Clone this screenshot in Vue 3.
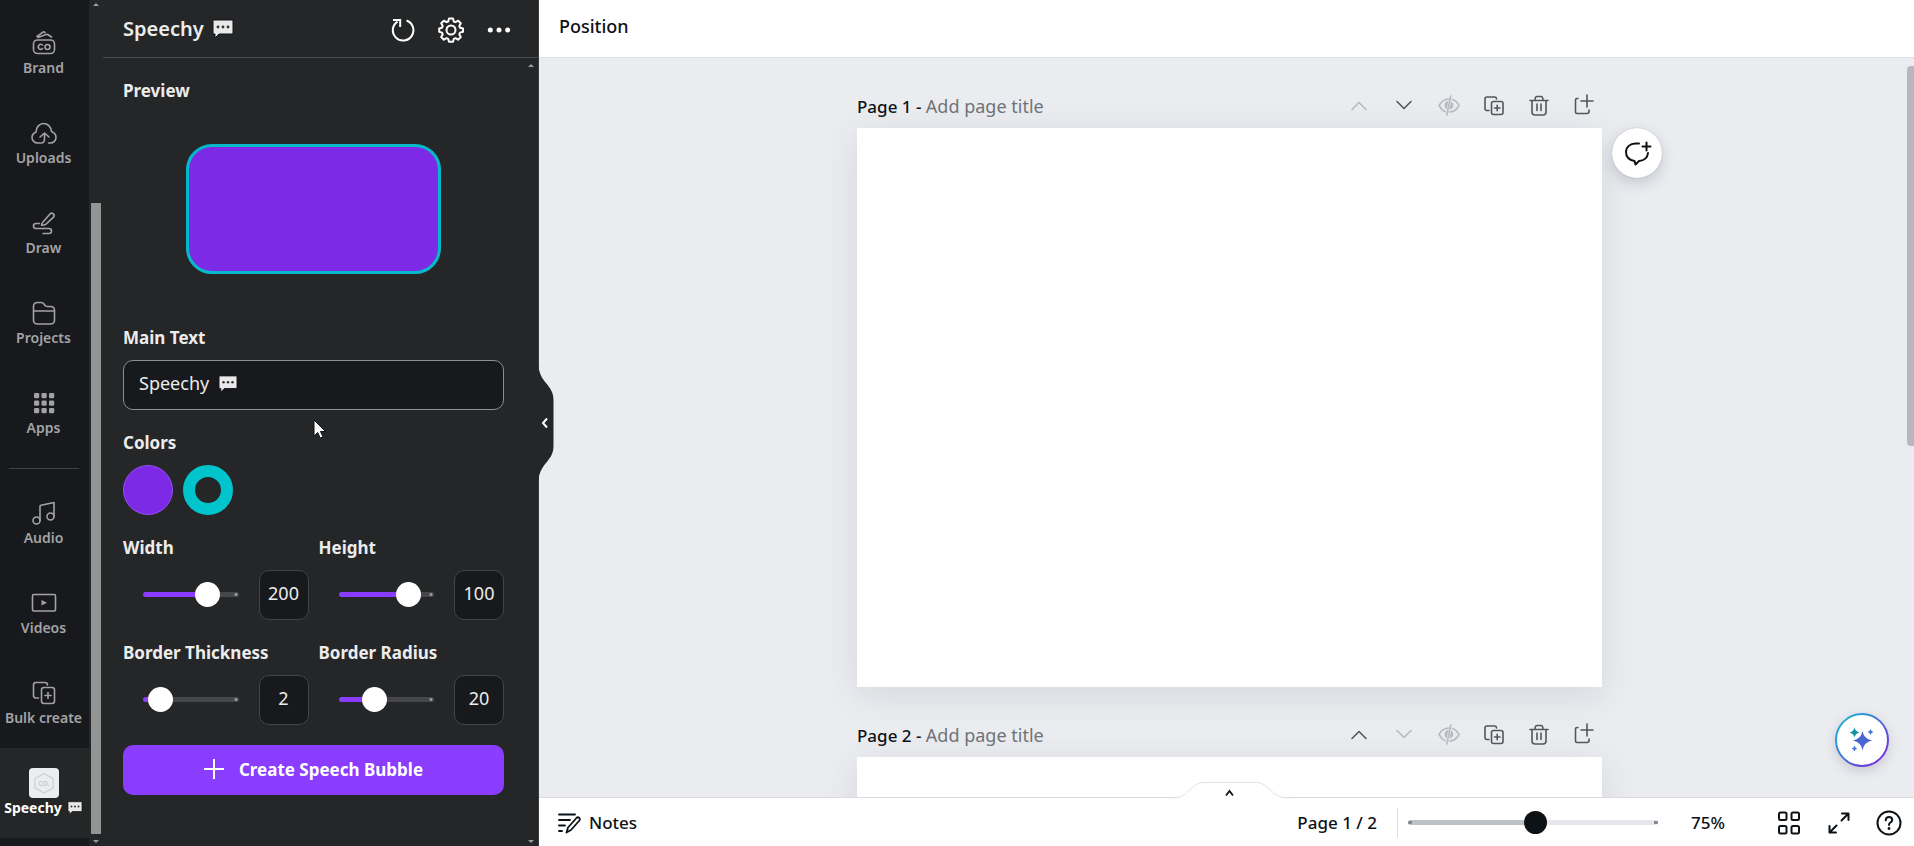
<script setup>
import { ref, computed } from 'vue'

const navTop = ['Brand', 'Uploads', 'Draw', 'Projects', 'Apps']
const navBottom = ['Audio', 'Videos', 'Bulk create']
const mainText = ref('Speechy')
const sliders = ref([
  { id: 'width', label: 'Width', value: 200, max: 272 },
  { id: 'height', label: 'Height', value: 100, max: 123 },
  { id: 'thickness', label: 'Border Thickness', value: 2, max: 26 },
  { id: 'radius', label: 'Border Radius', value: 20, max: 61 }
])
const zoom = ref(75)
const zoomFill = computed(() => Math.round((zoom.value / 147) * 100) + '%')
const fill = (s) => Math.round((s.value / s.max) * 100) + '%'
const pages = [
  { n: 1, up: false, down: true },
  { n: 2, up: true, down: false }
]
</script>

<template>
  <div class="app">
    <svg class="defs" aria-hidden="true">
      <symbol id="bubble" viewBox="0 0 22 20">
        <path d="M2 1h18q1 0 1 1v12q0 1-1 1H7l-4 4v-4H2q-1 0-1-1V2q0-1 1-1z" fill="#e9e9ea" stroke="#121316" stroke-width="1" />
        <circle cx="6" cy="8" r="1.4" fill="#333" /><circle cx="11" cy="8" r="1.4" fill="#333" /><circle cx="16" cy="8" r="1.4" fill="#333" />
      </symbol>
      <symbol id="i-Brand" viewBox="0 0 30 30">
        <rect x="4.500" y="12" width="21" height="13.500" rx="4" />
        <path d="M8 8.500l6-4.300q1.200-.8 2 .4M9 9.500l8-3q1.500-.4 2.500.5l3 2" />
        <path d="M13.500 17q-2-1.600-3.600.2-1.400 2 .2 3.600 1.800 1.200 3.400-.2" />
        <circle cx="18.500" cy="19" r="2.500" />
      </symbol>
      <symbol id="i-Uploads" viewBox="0 0 30 30">
        <path d="M11 25H8.500A5.500 5.500 0 0 1 3 19.500c0-3 1.800-4.500 4-5.500.2-5 3.500-8.500 7.500-8.500s7.500 3 8 8c2.500 1 4.500 3 4.500 6 0 3-2.500 5.500-5.500 5.500H19.500M11 19l4.500-4 4.500 4M15.500 15.500v5.500q0 4-3.500 4" />
      </symbol>
      <symbol id="i-Draw" viewBox="0 0 30 30">
        <path d="M14 14l7-8q1.500-1.600 3.300-.2 1.700 1.600.2 3.300l-7.500 7q-1.500 1-4.500 1.200.3-2 1.500-3.300zM10.500 15.500H7a2.500 2.500 0 0 0 0 5H20a2.500 2.500 0 0 1 0 5H14" />
      </symbol>
      <symbol id="i-Projects" viewBox="0 0 30 30">
        <path d="M4.500 22V8.500q0-4 4-4h3.500q2 0 3 1.500l.8 1.200q.7 1.300 2.500 1.300h3.200q4 0 4 4V22q0 4-4 4h-13q-4 0-4-4zM4.500 13h21" />
      </symbol>
      <symbol id="i-Apps" viewBox="0 0 30 30">
        <g fill="currentColor" stroke="none">
          <rect v-for="i in 9" :key="i" :x="5 + ((i - 1) % 3) * 7.5" :y="5 + Math.floor((i - 1) / 3) * 7.5" width="5.200" height="5.200" rx="1.300" />
        </g>
      </symbol>
      <symbol id="i-Audio" viewBox="0 0 30 30">
        <circle cx="7.500" cy="22.500" r="3.500" /><circle cx="21.500" cy="18.500" r="3.500" />
        <path d="M11 22.500V8.500q0-1 1-1.300L25 4.500v14" />
      </symbol>
      <symbol id="i-Videos" viewBox="0 0 30 30">
        <rect x="3.500" y="6.500" width="23" height="16.500" rx="1.500" />
        <path d="M12.500 12v5.500l5.500-2.700z" fill="currentColor" stroke="none" />
      </symbol>
      <symbol id="i-Bulk create" viewBox="0 0 30 30">
        <path d="M9.500 20H7q-2.500 0-2.500-2.500V7Q4.500 4.500 7 4.500h9Q18.500 4.500 18.500 7" />
        <rect x="12.500" y="9.500" width="13" height="16" rx="2.500" /><path d="M16 17.500h6M19 14.500v6" />
      </symbol>
    </svg>

    <nav class="rail" aria-label="Tools">
      <button v-for="n in navTop" :key="n" class="nav"><svg><use :href="'#i-' + n" /></svg><span>{{ n }}</span></button>
      <hr class="rule">
      <button v-for="n in navBottom" :key="n" class="nav"><svg><use :href="'#i-' + n" /></svg><span>{{ n }}</span></button>
      <button class="nav current">
        <svg viewBox="0 0 30 30" class="logo"><rect width="30" height="30" rx="4" fill="#ebeef1" /><path d="M15 5.500l9 5v9.500l-9 5-9-5v-9.500z" fill="none" stroke="#d3d5d7" stroke-width="1.500" /><text x="15" y="18" text-anchor="middle">CO.</text></svg>
        <span>Speechy <svg class="mini"><use href="#bubble" /></svg></span>
      </button>
      <div class="rail-end"></div>
    </nav>

    <div class="rail-scroll">
      <svg viewBox="0 0 6 3"><path d="M0 3l3-3 3 3z" /></svg>
      <div class="thumb"></div>
      <svg viewBox="0 0 6 3"><path d="M0 0l3 3 3-3z" /></svg>
    </div>

    <aside class="panel">
      <header class="panel-head">
        <h1>Speechy <svg class="emoji"><use href="#bubble" /></svg></h1>
        <button aria-label="Reload"><svg viewBox="0 0 30 30"><path d="M18.500 5.500A10.300 10.300 0 1 1 9.500 6.600M5 5h7.200v7" stroke-width="2" /></svg></button>
        <button aria-label="Settings"><svg viewBox="0 0 30 30"><circle cx="15" cy="15" r="4.500" stroke-width="2" /><path stroke-width="2" stroke-linejoin="round" d="M13 3.500h4l.8 3 1.700.7 2.700-1.500 2.600 2.600-1.500 2.700.7 1.700 3 .8v3.300l-3 .8-.7 1.800 1.500 2.700-2.700 2.600-2.600-1.500-1.700.7-.8 2.900h-4l-.8-2.900-1.700-.7-2.700 1.500-2.600-2.600 1.500-2.700-.7-1.800-2.800-.8v-3.300l2.800-.8.700-1.700-1.500-2.700 2.600-2.600 2.700 1.500 1.700-.7z" /></svg></button>
        <button aria-label="More"><svg viewBox="0 0 30 30"><g fill="currentColor" stroke="none"><circle cx="6.300" cy="15" r="2.500" /><circle cx="15" cy="15" r="2.500" /><circle cx="23.700" cy="15" r="2.500" /></g></svg></button>
      </header>
      <div class="panel-body">
        <form class="form" @submit.prevent>
          <section class="field"><h2>Preview</h2><div class="preview"><div class="shape"></div></div></section>
          <section class="field">
            <label for="main-text">Main Text</label>
            <div class="text-wrap"><input id="main-text" v-model="mainText" type="text"><svg class="emoji in-text"><use href="#bubble" /></svg></div>
          </section>
          <section class="field">
            <h2>Colors</h2>
            <div class="swatches"><button type="button" class="swatch solid" aria-label="Fill color"></button><button type="button" class="swatch ring" aria-label="Border color"></button></div>
          </section>
          <div class="grid">
            <section v-for="s in sliders" :key="s.id" class="field">
              <label :for="s.id">{{ s.label }}</label>
              <div class="slide-row">
                <div class="track-wrap"><input :id="s.id" v-model.number="s.value" class="range" type="range" min="0" :max="s.max" :style="{ '--fill': fill(s) }"></div>
                <input v-model.number="s.value" class="num" type="text" :aria-label="s.label + ' value'">
              </div>
            </section>
          </div>
          <button class="create"><svg viewBox="0 0 20 20"><path d="M10 0v20M0 10h20" /></svg>Create Speech Bubble</button>
        </form>
        <div class="body-scroll">
          <svg viewBox="0 0 6 3"><path d="M0 3l3-3 3 3z" /></svg>
          <svg viewBox="0 0 6 3"><path d="M0 0l3 3 3-3z" /></svg>
        </div>
      </div>
      <button class="handle" aria-label="Collapse panel"><svg viewBox="0 0 16 120"><path d="M0 0c1 11 4 15 8 20s7.500 9 7.500 17v46c0 8-3.500 12-7.500 17s-7 9-8 20z" fill="#252627" /><path d="M9 55.500l-4 4.500 4 4.500" fill="none" stroke="#fff" stroke-width="2" /></svg></button>
      <svg class="pointer" viewBox="0 0 13 20"><path d="M1 1v16l3.700-3.500L7.200 19l2.800-1.200-2.500-5.300h5z" fill="#fff" stroke="#111" /></svg>
    </aside>

    <main class="editor">
      <div class="topbar"><button>Position</button></div>
      <div class="canvas">
        <section v-for="p in pages" :key="p.n" class="page-block">
          <div class="page-head">
            <h3>Page {{ p.n }} - <span>Add page title</span></h3>
            <div class="acts">
              <button aria-label="Move up" :class="{ off: !p.up }"><svg viewBox="0 0 32 32"><path d="M9 19.500l7-7 7 7" /></svg></button>
              <button aria-label="Move down" :class="{ off: !p.down }"><svg viewBox="0 0 32 32"><path d="M9 11.500l7 7 7-7" /></svg></button>
              <button aria-label="Hide page" class="off"><svg viewBox="0 0 32 32"><path d="M12 21.700Q8.500 20 6 15.500q3.500-6.500 10-6.500M19.500 9.400Q23.500 10.800 26 15.500q-3.500 6.500-9.500 6.500M17.800 6l-4 19" /><path d="M15.500 11q-4 .8-4 4.500 0 3 2 4zM18 11.500l-1.500 8q3.500-1 4-4 0-2.500-2.500-4z" fill="currentColor" stroke="none" /></svg></button>
              <button aria-label="Duplicate page"><svg viewBox="0 0 32 32"><path d="M11 20.500H9q-2 0-2-2V9q0-2 2-2h7.500q2 0 2 2" /><rect x="13.500" y="11.500" width="11.500" height="13" rx="2" /><path d="M16.500 18h5.500M19.200 15.300v5.500" /></svg></button>
              <button aria-label="Delete page"><svg viewBox="0 0 32 32"><path d="M7 10.500h18M12 10.500q0-4 2-4h4q2 0 2 4M9 10.500V22q0 3 3 3h8q3 0 3-3V10.500M14 14v6.500M18 14v6.500" /></svg></button>
              <button aria-label="Add page"><svg viewBox="0 0 32 32"><path d="M10 8.500H9Q7.500 8.500 7.500 10v12q0 1.500 1.500 1.500h10q2 0 2-2V20M13 11h12M19 5v12" /></svg></button>
            </div>
          </div>
          <div class="page">
            <button v-if="p.n === 1" class="comment" aria-label="Add comment"><svg viewBox="0 0 30 30"><path d="M17 5.500h-3.500C8 5.500 4 9 4 14c0 4.500 3 8 8.500 9l1 3.500 3.500-3.500c5.500-.5 8.500-3.500 9-8M24.500 4.500v8M20.500 8.500h8" /></svg></button>
          </div>
        </section>
        <div class="canvas-scroll"></div>
        <button class="assist" aria-label="Assistant"><svg viewBox="0 0 54 54">
          <defs><linearGradient id="rg" x1="0" y1="0" x2="1" y2="1"><stop offset=".15" stop-color="#1fa9d1" /><stop offset=".85" stop-color="#7137dd" /></linearGradient></defs>
          <circle cx="27" cy="27" r="26" fill="#fff" stroke="url(#rg)" stroke-width="2" />
          <path d="M27.500 18q1.500 8 9.500 9.500-8 1.500-9.500 10-1.500-8.500-9.500-10 8-1.500 9.500-9.500z" fill="#4a68d0" />
          <path d="M19.500 14.500q.8 4 5 5-4.200 1-5 5-.8-4-5-5 4.200-1 5-5z" fill="#1593a5" />
          <path d="M35.500 16q.5 2.500 3 3-2.500.5-3 3-.5-2.500-3-3 2.500-.5 3-3zM19.500 32.500q.5 2.500 3 3-2.500.5-3 3-.5-2.500-3-3 2.500-.5 3-3z" fill="#4071cf" />
        </svg></button>
      </div>
      <footer class="bottom">
        <button class="drawer" aria-label="Show pages"><svg viewBox="0 0 120 17"><path d="M0 16.500c14 0 16-5 21-10s8-6 14-6h50c6 0 9 1 14 6s7 10 21 10z" fill="#fff" /><path d="M0 16c14 0 16-5 21-9.500S29 .5 35 .5h50c6 0 9 1.500 14 6s7 9.500 21 9.500" fill="none" stroke="#e1e2e6" /><path d="M56 13.500l3.500-4.500 3.500 4.500" fill="none" stroke="#0d1216" stroke-width="1.800" /></svg></button>
        <button class="notes"><svg viewBox="0 0 24 24"><path d="M2 3.500h16M2 9h11M2 14.500h6M2 20h3M9.500 21.500l1.500-5L19.500 7q1.300-1.300 2.700-.2 1.200 1.300.2 2.700L14 19z" /></svg>Notes</button>
        <span class="count">Page 1 / 2</span>
        <div class="vr"></div>
        <input v-model.number="zoom" class="zoom" type="range" min="0" max="147" aria-label="Zoom" :style="{ '--fill': zoomFill }">
        <button class="pct">75%</button>
        <button class="ic" aria-label="Grid view"><svg viewBox="0 0 30 30"><rect x="5" y="4.500" width="7.500" height="7.500" rx="1.500" /><rect x="17.500" y="4.500" width="7.500" height="7.500" rx="1.500" /><rect x="5" y="18" width="7.500" height="7.500" rx="1.500" /><rect x="17.500" y="18" width="7.500" height="7.500" rx="1.500" /></svg></button>
        <button class="ic" aria-label="Full screen"><svg viewBox="0 0 30 30"><path d="M18 5.500h6.500V12M24.500 5.500l-7 7M5.500 18v6.500H12M5.500 24.500l7-7" /></svg></button>
        <button class="ic" aria-label="Help"><svg viewBox="0 0 30 30"><circle cx="15" cy="15" r="11.500" /><path d="M11.700 12.300q.3-3.300 3.300-3.300 3.200 0 3.200 2.800 0 1.700-1.700 2.600-1.500.8-1.500 2.600" /><circle cx="15" cy="20.500" r="1.400" fill="currentColor" stroke="none" /></svg></button>
      </footer>
    </main>
  </div>
</template>

<style>
html, body { height: 100%; }
body { margin: 0; overflow: hidden; }
</style>

<style scoped>
* { box-sizing: border-box; }
.app { display: flex; height: 100vh; overflow: hidden; background: #252627; font-family: "Noto Sans", "Liberation Sans", sans-serif; font-size: 17px; color: #0d1216; }
.defs { position: absolute; width: 0; height: 0; }
svg { display: block; flex: none; }
button { font: inherit; color: inherit; background: none; border: 0; padding: 0; margin: 0; }
h1, h2, h3 { margin: 0; }

.rail { width: 89px; flex: none; padding-top: 8px; display: flex; flex-direction: column; background: #18191d; }
.nav { height: 90px; flex: none; display: flex; flex-direction: column; align-items: center; padding: 20px 2px 0 0; color: #a3a3a4; font-size: 14px; font-weight: 600; line-height: 20px; }
.nav > svg { width: 30px; height: 30px; fill: none; stroke: currentColor; stroke-width: 1.6; stroke-linecap: round; stroke-linejoin: round; }
.nav span { display: flex; align-items: center; gap: 5px; white-space: nowrap; }
.rule { width: 70px; height: 1px; margin: 10px 10px 9px 9px; border: 0; background: #404144; flex: none; }
.current { background: #252627; color: #fff; }
.current span { font-weight: 700; }
.nav .logo { stroke: none; }
.logo text { font: 700 7px "Noto Sans", sans-serif; fill: #c8cacc; stroke: none; }
.mini { width: 16px; height: 14px; }
.rail-end { flex: 1; background: #18191d; border-top-right-radius: 8px; }
.rail-scroll { width: 14px; flex: none; display: flex; flex-direction: column; align-items: center; padding: 3px 0; }
.rail-scroll svg, .body-scroll svg { width: 6px; height: 3px; fill: #9a9b9b; }
.rail-scroll .thumb { width: 10px; margin: 197px 0 6px; flex: 1; background: #939594; }

.panel { position: relative; width: 436px; flex: none; display: flex; flex-direction: column; color: #ececec; border-right: 1px solid #3a3b3d; }
.panel-head { height: 58px; flex: none; display: flex; align-items: center; gap: 18px; padding: 2px 24px 0 20px; border-bottom: 1px solid #4a4b4e; }
.panel-head h1 { flex: 1; display: flex; align-items: center; gap: 8px; padding-bottom: 2px; font-size: 20px; font-weight: 600; line-height: 26px; }
.panel-head button svg { width: 30px; height: 30px; fill: none; stroke: currentColor; color: #fff; }
.emoji { width: 22px; height: 20px; }
.panel-body { flex: 1; min-height: 0; display: flex; }
.form { flex: 1; padding: 20px 14px 0 20px; display: flex; flex-direction: column; gap: 20px; }
.body-scroll { width: 20px; display: flex; flex-direction: column; align-items: center; justify-content: space-between; padding: 6px 0 3px 6px; }
.field { display: flex; flex-direction: column; gap: 10px; }
.field h2, .field label { font-size: 17px; font-weight: 700; line-height: 25px; white-space: nowrap; }
.preview { height: 192px; display: flex; align-items: center; justify-content: center; }
.shape { width: 255px; height: 130px; border: 3px solid #06b9ca; border-radius: 26px; background: #7d2ae7; }
.text-wrap { position: relative; }
.text-wrap input { display: block; width: 100%; height: 50px; padding: 0 15px 4px; border: 1px solid #8d8e8f; border-radius: 10px; background: #18191c; color: #ececec; font: 18px "Noto Sans", sans-serif; }
.in-text { position: absolute; left: 95px; top: 15px; width: 20px; height: 18px; }
.swatches { display: flex; gap: 10px; }
.swatch { width: 50px; height: 50px; border-radius: 50%; }
.solid { background: #7d2ae7; border: 1px solid #9150ef; }
.ring { border: 12px solid #00c4cc; }
.grid { display: grid; grid-template-columns: 1fr 1fr; gap: 20px 10px; }
.slide-row { display: flex; align-items: center; }
.track-wrap { flex: 1; padding: 0 20px 2px; }
.range, .zoom { appearance: none; display: block; width: 100%; min-width: 0; height: 26px; margin: 0; background: none; }
.range::-webkit-slider-runnable-track { height: 5px; border-radius: 3px; background: radial-gradient(circle at calc(100% - 3px) 50%, #999a9b 1px, transparent 2px), linear-gradient(to right, #8b3dff var(--fill), #46474a var(--fill)); }
.range::-webkit-slider-thumb { appearance: none; width: 25px; height: 25px; margin-top: -10px; border-radius: 50%; background: #fff; }
.num { width: 50px; height: 50px; padding: 0 0 4px; text-align: center; border: 1px solid #434447; border-radius: 10px; background: #18191c; color: #ececec; font: 18px "Noto Sans", sans-serif; }
.create { height: 50px; display: flex; align-items: center; justify-content: center; gap: 15px; padding-bottom: 2px; border-radius: 10px; background: #8b3dff; color: #fff; font-weight: 700; }
.create svg { width: 20px; height: 20px; fill: none; stroke: #fff; stroke-width: 2; }
.handle { position: absolute; left: 100%; top: 50%; margin-top: -60px; z-index: 2; }
.handle svg { width: 16px; height: 120px; }
.pointer { position: absolute; left: 210px; top: 419px; width: 13px; height: 20px; }

.editor { flex: 1; min-width: 0; display: flex; flex-direction: column; background: #fff; }
.topbar { height: 58px; flex: none; display: flex; align-items: center; padding: 0 20px 5px; border-bottom: 1px solid #dfe0e4; font-size: 18px; font-weight: 500; }
.canvas { position: relative; flex: 1; min-height: 0; overflow: hidden; background: #ebecf0; padding: 32px 0 0 6px; display: flex; flex-direction: column; align-items: center; gap: 32px; }
.page-block { width: 745px; flex: none; display: flex; flex-direction: column; gap: 6px; }
.page-head { position: relative; z-index: 1; display: flex; align-items: center; justify-content: space-between; height: 32px; padding-right: 2px; }
.page-head h3 { font-size: 17px; font-weight: 500; line-height: 32px; }
.page-head h3 span { font-size: 18px; font-weight: 400; color: #6f7378; }
.acts { display: flex; gap: 13px; color: #53575c; }
.acts svg { width: 32px; height: 32px; fill: none; stroke: currentColor; stroke-width: 1.6; stroke-linecap: round; stroke-linejoin: round; }
.acts .off { color: #b7bbc1; }
.page { position: relative; height: 559px; background: #fff; box-shadow: 0 8px 32px rgba(60, 70, 90, .12); }
.comment { position: absolute; left: calc(100% + 10px); top: 0; width: 50px; height: 50px; border-radius: 50%; background: #fff; display: grid; place-items: center; box-shadow: 0 0 1px rgba(60, 70, 90, .4), 0 5px 14px rgba(60, 70, 90, .22); }
.comment svg { width: 30px; height: 30px; fill: none; stroke: #0d1216; stroke-width: 2; stroke-linecap: round; stroke-linejoin: round; }
.canvas-scroll { position: absolute; right: 0; top: 8px; width: 7px; height: 380px; border-radius: 4px 0 0 4px; background: #b6b8bd; }
.assist { position: absolute; right: 25px; bottom: 30px; border-radius: 50%; box-shadow: 0 4px 12px rgba(60, 70, 90, .2); }
.assist svg { width: 54px; height: 54px; }
.bottom { position: relative; height: 49px; flex: none; display: flex; align-items: center; padding: 1px 0 0 18px; border-top: 1px solid #d9dbdf; font-weight: 500; }
.drawer { position: absolute; left: calc(50% + 3px); top: -16px; margin-left: -60px; }
.drawer svg { width: 120px; height: 17px; }
.notes { display: flex; align-items: center; gap: 8px; margin-right: auto; }
.notes svg { width: 24px; height: 24px; fill: none; stroke: #0d1216; stroke-width: 1.8; stroke-linecap: round; stroke-linejoin: round; }
.vr { width: 1px; height: 30px; margin: 0 10px 0 20px; background: #dcdee1; }
.zoom { width: 250px; }
.zoom::-webkit-slider-runnable-track { height: 5px; border-radius: 3px; background: radial-gradient(circle at 2px 50%, #85898f 2px, transparent 2px), radial-gradient(circle at calc(100% - 2px) 50%, #85898f 2px, transparent 2px), linear-gradient(to right, #bdc2c8 var(--fill), #e6e7eb var(--fill)); }
.zoom::-webkit-slider-thumb { appearance: none; width: 23px; height: 23px; margin-top: -9px; border-radius: 50%; background: #0d1216; }
.pct { width: 100px; text-align: center; }
.ic { width: 50px; display: grid; place-items: center; }
.pct + .ic { margin-left: 6px; }
.ic svg { width: 30px; height: 30px; fill: none; stroke: currentColor; stroke-width: 2; stroke-linecap: round; stroke-linejoin: round; }
</style>
